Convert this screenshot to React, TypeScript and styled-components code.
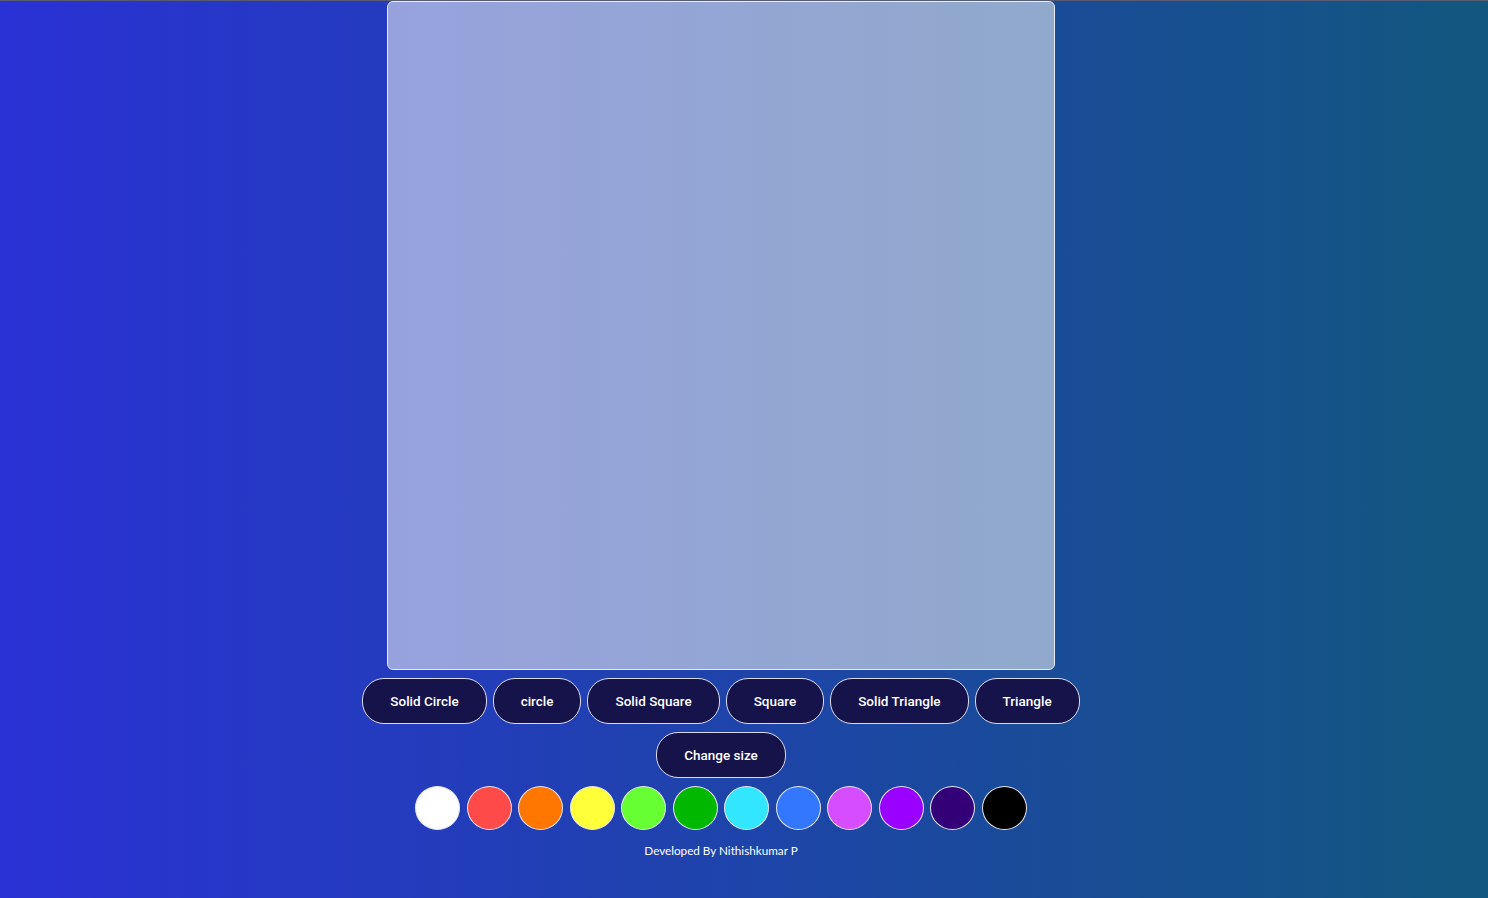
import React from "react";
import styled, { createGlobalStyle } from "styled-components";

const Global = createGlobalStyle`
  html, body { margin: 0; padding: 0; }
  body {
    min-height: 898px;
    background: linear-gradient(to right, #2a31d5, #12577e);
    border-top: 1px solid #585c74;
    box-sizing: border-box;
    font-family: Roboto, "Liberation Sans", sans-serif;
  }
`;

const Page = styled.main`
  display: flex;
  flex-direction: column;
  align-items: center;
  padding-right: 46px;
`;

const Canvas = styled.div`
  width: 668px;
  height: 669px;
  box-sizing: border-box;
  border: 1px solid #e8ecf8;
  border-radius: 6px;
  background: linear-gradient(to right, #97a2dd, #90a9cb);
`;

const ToolRow = styled.div`
  display: flex;
  justify-content: center;
  gap: 6px;
  margin-top: 8px;
`;

const ShapeButton = styled.button`
  height: 46px;
  box-sizing: border-box;
  padding: 0 27px;
  border: 1px solid #dcdcf0;
  border-radius: 22px;
  background: #16124a;
  color: #ffffff;
  font-family: Roboto, "Liberation Sans", sans-serif;
  font-weight: 500;
  font-size: 13.5px;
  cursor: pointer;
`;

const Palette = styled.div`
  display: flex;
  gap: 6.5px;
  margin-top: 8px;
`;

const Swatch = styled.button<{ $color: string }>`
  width: 45px;
  height: 44px;
  padding: 0;
  border: 1px solid #e6e6f2;
  border-radius: 50%;
  background: ${(p) => p.$color};
  cursor: pointer;
`;

const Footer = styled.p`
  margin: 12px 0 0;
  color: #ffffff;
  font-family: Lato, "Noto Sans", sans-serif;
  font-size: 11.7px;
  line-height: 16px;
`;

const shapes = ["Solid Circle", "circle", "Solid Square", "Square", "Solid Triangle", "Triangle"];
const colors = [
  "#ffffff",
  "#ff4a4a",
  "#ff7700",
  "#ffff3a",
  "#66ff33",
  "#00b800",
  "#33e6ff",
  "#3377ff",
  "#d64dff",
  "#9900ff",
  "#330077",
  "#000000",
];

export default function App() {
  return (
    <>
      <Global />
      <Page>
        <Canvas />
        <ToolRow>
          {shapes.map((s) => (
            <ShapeButton key={s}>{s}</ShapeButton>
          ))}
        </ToolRow>
        <ToolRow>
          <ShapeButton>Change size</ShapeButton>
        </ToolRow>
        <Palette>
          {colors.map((c) => (
            <Swatch key={c} $color={c} aria-label={c} />
          ))}
        </Palette>
        <Footer>Developed By Nithishkumar P</Footer>
      </Page>
    </>
  );
}
